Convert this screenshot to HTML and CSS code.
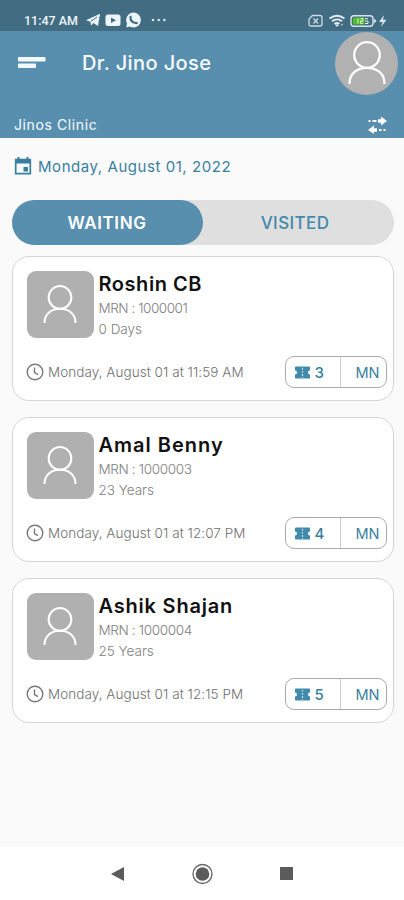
FILE: index.html
```
<!DOCTYPE html>
<html lang="en">
<head>
<meta charset="utf-8">
<title>Jinos Clinic</title>
<link rel="stylesheet" href="styles.css">
</head>
<body>
<svg class="defs" width="0" height="0">
  <symbol id="person" viewBox="0 0 38 44"><circle cx="19" cy="14" r="12.800"/><path d="M1.500 43C1.500 32.500 9 26.800 19 26.800S36.500 32.500 36.500 43"/></symbol>
  <symbol id="clock" viewBox="0 0 18 18"><circle cx="9" cy="9" r="7.800"/><path d="M8.500 4.500V9.500L12 11.700"/></symbol>
  <symbol id="ticket" viewBox="0 0 16 13"><path fill="currentColor" d="M1 0H15Q16 0 16 1V4.300A2.200 2.200 0 0 0 16 8.700V12Q16 13 15 13H1Q0 13 0 12V8.700A2.200 2.200 0 0 0 0 4.300V1Q0 0 1 0Z"/><path stroke="#c5dce7" stroke-width="1.300" stroke-dasharray="2 1.300" d="M8 1.500V12"/></symbol>
</svg>
<div class="screen">
  <div class="status">
    <span class="time">11:47 AM</span>
    <svg class="apps" width="82" height="16" viewBox="0 0 82 16">
      <path fill="#edf6fa" d="M0 8.300L14 1.800L12 14L7.300 11L5.200 13.500L4.300 9.700Z"/>
      <path stroke="#426c82" d="M4.700 9.500L11 5"/>
      <rect x="19.500" y="2.500" width="15" height="11.500" rx="2.500" fill="#edf6fa"/>
      <path fill="#426c82" d="M25 5.500V11L30 8.200Z"/>
      <circle cx="47.500" cy="8" r="7.400" fill="#edf6fa"/><path d="M41 11L40.300 15.400L45 14Z" fill="#edf6fa"/>
      <path stroke="#426c82" stroke-width="2.200" stroke-linecap="round" fill="none" d="M44.500 4.800Q44 10.500 50.800 11.200"/>
      <g fill="#d6e4ea"><circle cx="67" cy="8" r="1.300"/><circle cx="72.700" cy="8" r="1.300"/><circle cx="78.400" cy="8" r="1.300"/></g>
    </svg>
    <svg class="system" width="80" height="14" viewBox="0 0 80 14" fill="none">
      <path stroke="#c9dce5" stroke-width="1.300" d="M4.500 1.500H12Q14 1.500 14 3.500V10Q14 12 12 12H3Q1 12 1 10V5Z"/>
      <path stroke="#c9dce5" stroke-width="1.300" d="M5.500 4.500L10 9.500M10 4.500L5.500 9.500"/>
      <g stroke="#e1edf3" stroke-width="1.900"><path d="M21.500 4.500Q29 -1 36.500 4.500M24 7.300Q29 3.500 34 7.300M26.500 10Q29 8 31.500 10"/></g>
      <path fill="#e1edf3" d="M27 10.500H31L29 13Z"/><path stroke="#c9dce5" d="M33 11.500L35 10"/>
      <rect x="43" y="1.700" width="22" height="10.600" rx="3" stroke="#d6e4ec" stroke-width="1.400"/>
      <rect x="45" y="3.500" width="11.500" height="7" rx="1" fill="#55bd2d"/>
      <path stroke="#e0f2dc" d="M50 4.500V9.500M52.500 4.700H55V7H52.500V9.300H55M57 4.700H60M57 7H60V9.500H57"/>
      <path fill="#d6e4ec" d="M66 4.500L68.500 7L66 9.500ZM76 1L71 8H74.500L73 13L78.500 5.800H75Z"/>
    </svg>
  </div>
  <header class="appbar">
    <div class="top">
      <svg width="28" height="14" viewBox="0 0 28 14"><g fill="#f4fafc"><rect y="1" width="27.500" height="4.500" rx="1"/><rect y="7.500" width="18" height="4.500" rx="1"/></g></svg>
      <h1>Dr. Jino Jose</h1>
      <div class="profile"><svg width="38" height="44"><use href="#person"/></svg></div>
    </div>
    <div class="clinic"><span>Jinos Clinic</span>
      <svg width="21" height="18" viewBox="0 0 21 18" fill="#fff"><path d="M11 3.300H14V0.500L20 5L14 9.500V6.700H11ZM1.500 4H3.500V6H1.500ZM5.500 4H9.500V6H5.500ZM10 12.300H7V9.500L1 14L7 18V15.700H10ZM12 13H14.500V15H12ZM16.500 13H18.500V15H16.500Z"/></svg>
    </div>
  </header>
  <main>
    <div class="date">
      <svg width="18" height="20" viewBox="0 0 18 20"><path fill="none" stroke="#397f9f" stroke-width="1.700" d="M1.700 3.500H16.300V17.700H1.700Z"/><path fill="#397f9f" d="M1 3H17V7.500H1ZM3.500 1H5.500V4H3.500ZM12.500 1H14.500V4H12.500ZM9.500 11H14V15.500H9.500Z"/></svg>
      <span>Monday, August 01, 2022</span>
    </div>
    <div class="tabs"><div class="tab active">WAITING</div><div class="tab">VISITED</div></div>
    <section class="list">
      <article class="card">
        <div class="patient"><div class="avatar"><svg width="34" height="39"><use href="#person"/></svg></div>
          <div><h2 class="n1">Roshin CB</h2><p class="mrn m1">MRN : 1000001</p><p class="age">0 Days</p></div></div>
        <div class="visit"><svg class="clock" width="18" height="18"><use href="#clock"/></svg><span class="when">Monday, August 01 at 11:59 AM</span>
          <div class="token"><div class="number"><svg width="15" height="13"><use href="#ticket"/></svg>3</div><div class="session">MN</div></div></div>
      </article>
      <article class="card">
        <div class="patient"><div class="avatar"><svg width="34" height="39"><use href="#person"/></svg></div>
          <div><h2 class="n2">Amal Benny</h2><p class="mrn">MRN : 1000003</p><p class="age">23 Years</p></div></div>
        <div class="visit"><svg class="clock" width="18" height="18"><use href="#clock"/></svg><span class="when">Monday, August 01 at 12:07 PM</span>
          <div class="token"><div class="number"><svg width="15" height="13"><use href="#ticket"/></svg>4</div><div class="session">MN</div></div></div>
      </article>
      <article class="card">
        <div class="patient"><div class="avatar"><svg width="34" height="39"><use href="#person"/></svg></div>
          <div><h2>Ashik Shajan</h2><p class="mrn">MRN : 1000004</p><p class="age">25 Years</p></div></div>
        <div class="visit"><svg class="clock" width="18" height="18"><use href="#clock"/></svg><span class="when">Monday, August 01 at 12:15 PM</span>
          <div class="token"><div class="number"><svg width="15" height="13"><use href="#ticket"/></svg>5</div><div class="session">MN</div></div></div>
      </article>
    </section>
  </main>
  <nav>
    <svg width="14" height="16" viewBox="0 0 14 16"><path fill="#5b5b5b" d="M0 8L13 1V15Z"/></svg>
    <svg width="22" height="22" viewBox="0 0 22 22"><circle cx="10.500" cy="11" r="9.500" fill="none" stroke="#666" stroke-width="1.300"/><circle cx="10.500" cy="11" r="6.800" fill="#5b5b5b"/></svg>
    <svg width="13" height="13"><rect width="13" height="13" fill="#5b5b5b"/></svg>
  </nav>
</div>
</body>
</html>
```
FILE: styles.css
```
* { box-sizing: border-box; }
body { margin: 0; font-family: Inter, "Liberation Sans", sans-serif; }
h1, h2, p { margin: 0; }
svg { display: block; flex: none; }
.defs { position: absolute; }
.screen { width: 404px; height: 900px; display: flex; flex-direction: column; background: #fafafa; overflow: hidden; }
.status { height: 31px; background: #426c82; display: flex; align-items: flex-start; padding: 12px 16px 0 24px; color: #edf6fa; }
.time { width: 62px; font: 500 12.500px/17px Roboto, sans-serif; white-space: nowrap; }
.system { margin: 2px 0 0 auto; }
.appbar { height: 107px; background: #598fae; color: #f8fcfe; display: flex; flex-direction: column; justify-content: space-between; }
.top { height: 64px; display: flex; align-items: center; padding: 0 6px 0 18px; }
h1 { margin-left: 36px; font-size: 20px; font-weight: 500; letter-spacing: .4px; white-space: nowrap; }
.profile { width: 63px; height: 63px; border-radius: 50%; background: #b1b1b1; margin-left: auto; display: grid; place-items: center; }
.profile svg, .avatar svg { fill: none; stroke: #fff; stroke-width: 2.300; }
.clinic { height: 27px; display: flex; align-items: center; justify-content: space-between; padding: 0 16px 0 14px; font-size: 14px; letter-spacing: .6px; }
main { flex: 1; padding: 0 10.500px 0 11.500px; }
.date { height: 56px; display: flex; align-items: center; gap: 6px; padding-left: 2.500px; color: #397f9f; font-size: 15px; font-weight: 400; letter-spacing: .55px; }
.tabs { display: grid; grid-template-columns: 1fr 1fr; margin-top: 6px; height: 45px; border-radius: 23px; background: #dfdfdf; color: #4389ac; font-size: 17px; font-weight: 500; letter-spacing: .6px; }
.tab { display: grid; place-items: center; }
.tab:last-child { padding-right: 6px; letter-spacing: .4px; }
.tab.active { border-radius: 23px; background: #598fae; color: #fff; font-weight: 600; }
.list { margin-top: 11px; display: flex; flex-direction: column; gap: 16.500px; }
.card { height: 144.500px; border: 1px solid #d5d5d5; border-radius: 17px; background: #fff; padding: 14px 6px 0 14px; }
.patient { display: flex; gap: 5px; height: 68px; }
.avatar { width: 67px; height: 67px; border-radius: 9px; background: #b0b0b0; display: grid; place-items: center; }
h2 { font-size: 20px; line-height: 27px; font-weight: 600; color: #111; white-space: nowrap; letter-spacing: .8px; }
.n1 { letter-spacing: .55px; }
.n2 { letter-spacing: 1px; }
.mrn, .age { font-size: 13.500px; line-height: 20.500px; font-weight: 300; color: #808080; }
.mrn { letter-spacing: -.35px; }
.m1 { letter-spacing: -.45px; }
.visit { display: flex; align-items: center; margin-top: 16px; height: 34px; }
.clock { fill: none; stroke: #777; stroke-width: 1.400; margin-left: -1px; }
.when { margin-left: 4.500px; font-size: 13.500px; font-weight: 300; color: #707070; white-space: nowrap; letter-spacing: .05px; }
.token { width: 102px; height: 32px; margin-left: auto; border: 1px solid #aaa; border-radius: 9px; display: flex; color: #397f9f; font-size: 15px; font-weight: 500; }
.number { width: 55px; border-right: 1px solid #ccc; padding-left: 9px; display: flex; align-items: center; gap: 5px; }
.number svg { color: #408aac; }
.session { flex: 1; display: flex; align-items: center; padding-left: 15px; font-weight: 400; font-size: 14.500px; }
nav { height: 53px; background: #fff; display: flex; align-items: center; justify-content: space-between; padding: 0 111px; }
```
